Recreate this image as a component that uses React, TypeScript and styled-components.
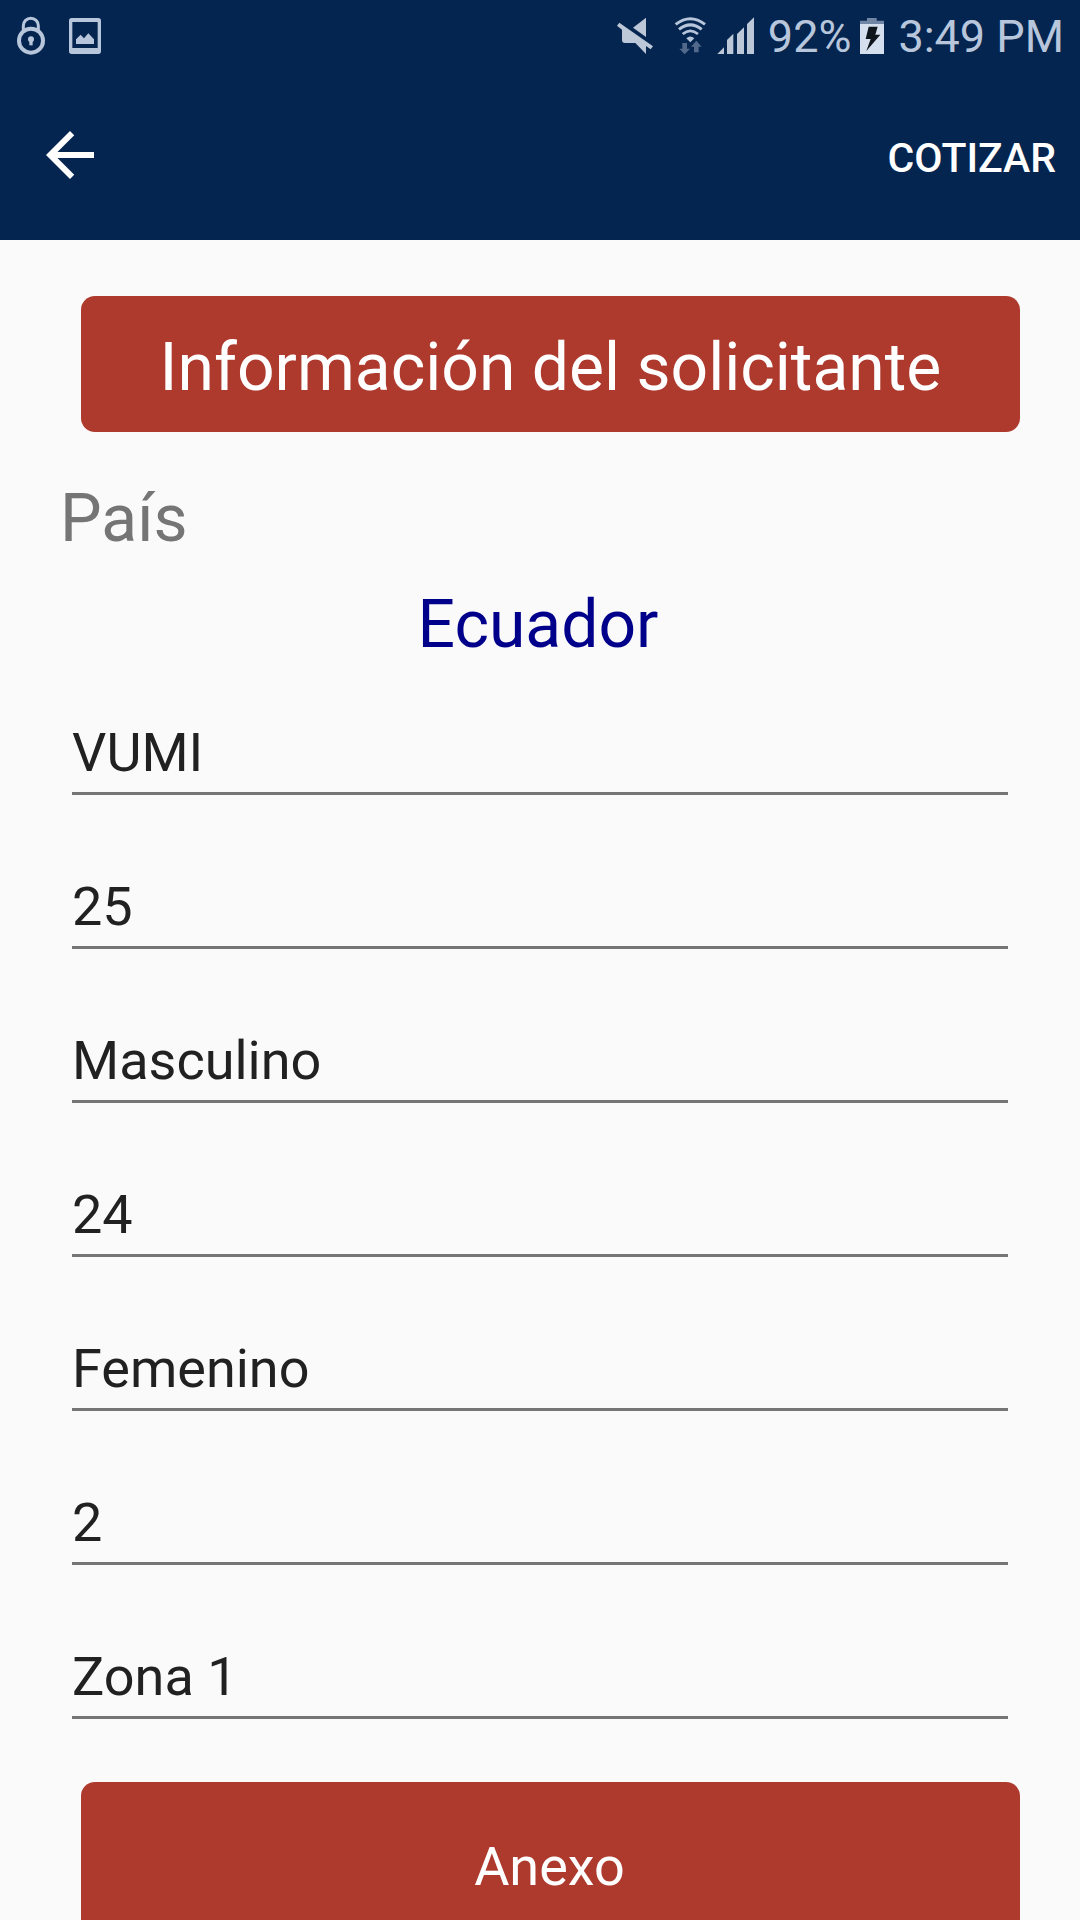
import React, { useState } from "react";
import styled, { createGlobalStyle } from "styled-components";

const navy = "#04254f";
const brick = "#ae392d";
const statusTint = "#b8c6dc";

const GlobalStyle = createGlobalStyle`
  *, *::before, *::after {
    box-sizing: border-box;
  }
  body {
    margin: 0;
    background: #fafafa;
    font-family: Roboto, "Noto Sans", sans-serif;
  }
  button, input, select {
    font: inherit;
  }
`;

const Screen = styled.div`
  display: flex;
  flex-direction: column;
  height: 100vh;
  overflow: hidden;
`;

const StatusBar = styled.div`
  flex: none;
  display: flex;
  justify-content: space-between;
  height: 72px;
  padding: 0 16px;
  background: ${navy};
  color: ${statusTint};
  font-size: 45px;
  line-height: 72px;
`;

const StatusGroup = styled.div<{ $gap: number }>`
  display: flex;
  align-items: center;
  gap: ${(p) => p.$gap}px;
  white-space: nowrap;
`;

const StatusText = styled.span`
  padding-top: 2px;
`;

const Glyph = styled.svg`
  flex: none;
  display: block;
`;

const AppBar = styled.header`
  flex: none;
  display: flex;
  align-items: center;
  justify-content: space-between;
  height: 168px;
  padding: 0 24px 2px 34px;
  background: ${navy};
`;

const BarButton = styled.button`
  display: flex;
  padding: 0;
  border: 0;
  background: none;
  color: #ffffff;
  cursor: pointer;
`;

const ActionButton = styled(BarButton)`
  padding-top: 6px;
  font-size: 41px;
  font-weight: 500;
  line-height: 48px;
`;

const Content = styled.main`
  flex: 1;
  min-height: 0;
  overflow-y: auto;
  scrollbar-width: none;
  padding: 56px 60px;
`;

const Banner = styled.h1`
  margin: 0 0 48px 21px;
  padding: 33px 0 25px;
  border-radius: 14px;
  background: ${brick};
  color: #ffffff;
  font-size: 66px;
  font-weight: 400;
  line-height: 78px;
  text-align: center;
`;

const CountryField = styled.div`
  display: flex;
  flex-direction: column;
  gap: 28px;
  margin-bottom: 56px;
  font-size: 66px;
  line-height: 78px;
`;

const CountryLabel = styled.label`
  color: #757575;
`;

const CountrySelect = styled.select`
  appearance: none;
  width: 100%;
  height: 78px;
  padding: 0 4px 0 0;
  border: 0;
  background: none;
  color: #00008b;
  line-height: 78px;
  text-align: center;
  text-align-last: center;
`;

const Fields = styled.div`
  display: flex;
  flex-direction: column;
  gap: 79px;
  padding: 0 12px;
`;

const TextField = styled.input`
  width: 100%;
  height: 75px;
  padding: 0 0 8px;
  border: 0;
  border-bottom: 3px solid #757575;
  border-radius: 0;
  outline: 0;
  background: none;
  color: #212121;
  font-size: 54px;
  line-height: 64px;
`;

const WideButton = styled.button`
  display: block;
  width: calc(100% - 21px);
  margin: 63px 0 0 21px;
  padding: 53px 2px 47px 0;
  border: 0;
  border-radius: 14px;
  background: ${brick};
  color: #ffffff;
  font-size: 54px;
  line-height: 64px;
  cursor: pointer;
`;

const LockIcon = () => (
  <Glyph width="30" height="40" viewBox="48 45 90 120" fill="none" stroke="currentColor" aria-hidden="true">
    <path d="M70 88V74a22.500 22.500 0 0 1 45 0v14" strokeWidth="9" />
    <circle cx="93" cy="119" r="36" strokeWidth="12" />
    <circle cx="93" cy="115" r="9" fill="currentColor" stroke="none" />
    <path d="M88 116h10v17H88z" fill="currentColor" stroke="none" />
  </Glyph>
);

const PictureIcon = () => (
  <Glyph width="34" height="40" viewBox="204 45 102 120" fill="currentColor" aria-hidden="true">
    <path
      fillRule="evenodd"
      d="M215 51h80q8 0 8 8v92q0 8-8 8h-80q-8 0-8-8V59q0-8 8-8zm2 12v78h76V63z"
    />
    <path d="M228 129v-14l14-14 10 11 13-15 17 18v14z" />
  </Glyph>
);

const MutedIcon = () => (
  <Glyph width="38" height="40" viewBox="45 45 114 120" fill="#bcc8d8" aria-hidden="true">
    <path d="M135 50v58L96 80z" />
    <path d="M55 65l101 71-7 9-14-10v24l-32-33H72q-9 0-9-9V86L48 74z" />
  </Glyph>
);

const WifiIcon = () => (
  <Glyph width="34" height="40" viewBox="219 45 102 120" fill="none" stroke="currentColor" aria-hidden="true">
    <path d="M224 70q44-34 88 0" strokeWidth="9" />
    <path d="M234 85q34-27 68 0" strokeWidth="9" />
    <path d="M245 99q23-19 46 0" strokeWidth="8" />
    <path d="M256 112q12-11 24 0l-12 12z" fill="currentColor" stroke="none" />
    <path
      d="M244 126h14v17h9l-16 17-16-17h9zM279 154h14v-17h9l-16-18-16 18h9z"
      fill="#52698c"
      stroke="none"
    />
  </Glyph>
);

const SignalIcon = () => (
  <Glyph width="38" height="40" viewBox="351 45 114 120" fill="#bcc8d8" aria-hidden="true">
    <path d="M352 159l20-20v20zM381 159v-42l19-19v61zM411 159V99l21-20v80zM441 159V69l21-20v110z" />
  </Glyph>
);

const ChargingIcon = () => (
  <Glyph width="26" height="40" viewBox="60 45 78 120" aria-hidden="true">
    <path d="M84 51h29v8h22v10H63V59h21z" fill="#7186a5" />
    <path d="M63 69h72v90H63z" fill="#d5dfee" />
    <path d="M89 77h27l-7 24h15l-42 49 13-36H80z" fill="#10151c" />
  </Glyph>
);

const BackIcon = () => (
  <Glyph width="72" height="72" viewBox="0 0 24 24" fill="currentColor" aria-hidden="true">
    <path d="M20 11H7.830l5.590-5.590L12 4l-8 8 8 8 1.410-1.410L7.830 13H20v-2z" />
  </Glyph>
);

const initialFields = [
  { name: "plan", label: "Plan", value: "VUMI" },
  { name: "edad", label: "Edad", value: "25" },
  { name: "sexo", label: "Sexo", value: "Masculino" },
  { name: "edadConyuge", label: "Edad del cónyuge", value: "24" },
  { name: "sexoConyuge", label: "Sexo del cónyuge", value: "Femenino" },
  { name: "hijos", label: "Número de hijos", value: "2" },
  { name: "zona", label: "Zona", value: "Zona 1" },
];

export default function App() {
  const [fields, setFields] = useState(initialFields);

  const update = (name: string, value: string) =>
    setFields((current) => current.map((f) => (f.name === name ? { ...f, value } : f)));

  return (
    <Screen>
      <GlobalStyle />
      <StatusBar>
        <StatusGroup $gap={22}>
          <LockIcon />
          <PictureIcon />
        </StatusGroup>
        <StatusGroup $gap={13}>
          <StatusGroup $gap={20}>
            <MutedIcon />
            <StatusGroup $gap={9}>
              <WifiIcon />
              <SignalIcon />
            </StatusGroup>
          </StatusGroup>
          <StatusGroup $gap={8}>
            <StatusText>92%</StatusText>
            <ChargingIcon />
          </StatusGroup>
          <StatusText>3:49 PM</StatusText>
        </StatusGroup>
      </StatusBar>
      <AppBar>
        <BarButton type="button" aria-label="Volver">
          <BackIcon />
        </BarButton>
        <ActionButton type="button">COTIZAR</ActionButton>
      </AppBar>
      <Content>
        <Banner>Información del solicitante</Banner>
        <CountryField>
          <CountryLabel htmlFor="pais">País</CountryLabel>
          <CountrySelect id="pais" defaultValue="Ecuador">
            <option>Ecuador</option>
          </CountrySelect>
        </CountryField>
        <Fields>
          {fields.map((f) => (
            <TextField
              key={f.name}
              type="text"
              name={f.name}
              aria-label={f.label}
              value={f.value}
              onChange={(e) => update(f.name, e.target.value)}
            />
          ))}
        </Fields>
        <WideButton type="button">Anexo</WideButton>
      </Content>
    </Screen>
  );
}
